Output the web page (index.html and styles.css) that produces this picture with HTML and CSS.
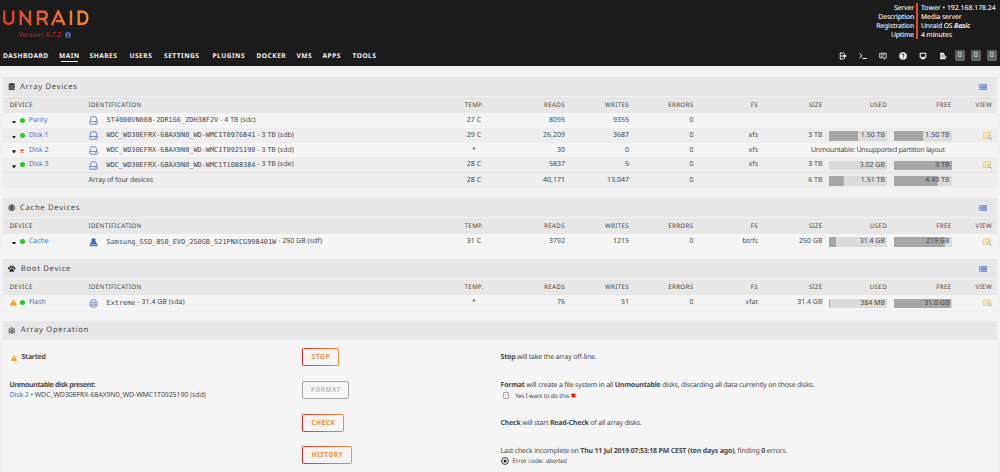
FILE: index.html
```html
<!DOCTYPE html>
<html lang="en">
<head>
<meta charset="utf-8">
<title>Tower/Main</title>
<link rel="stylesheet" href="styles.css">
</head>
<body>
<svg class="defs" aria-hidden="true">
  <symbol id="disk" viewBox="0 0 18 18"><path d="M1.5 11 4 2.5Q4.3 1.500 5.500 1.500H12.500Q13.700 1.500 14 2.500L16.500 11V15Q16.500 16.500 15 16.500H3Q1.500 16.500 1.500 15ZM1.500 11H16.500M12 13.800H14" fill="none" stroke="#5b78c4" stroke-width="1.700"/></symbol>
  <symbol id="ssd" viewBox="0 0 18 18"><path d="M5 1H13V8L16.500 12V16.500H1.500V12L5 8Z" fill="#4468c0"/><path d="M3 13.500H15" stroke="#dbe2f3" stroke-width="1.500"/></symbol>
  <symbol id="usb" viewBox="0 0 18 18"><path d="M4 7V4Q4 1.500 6 1.500H12Q14 1.500 14 4V7M1.500 8.500Q1.500 6.500 4 6.500H14Q16.500 6.500 16.500 8.500V12.500H1.500ZM3.500 12.500V14.500Q3.500 16.500 6 16.500H12Q14.500 16.500 14.500 14.500V12.500M4 10H14" fill="none" stroke="#5b78c4" stroke-width="1.500"/></symbol>
  <symbol id="list" viewBox="0 0 16 12"><path d="M0 1.500H2.500M0 4.500H2.500M0 7.500H2.500M0 10.500H2.500M3.500 1.500H16M3.500 4.500H16M3.500 7.500H16M3.500 10.500H16" stroke="#4d72c4" stroke-width="2"/></symbol>
  <symbol id="view" viewBox="0 0 18 16"><path d="M1 3Q1 1.500 2.500 1.500H7L8.500 1H14Q15 1 15 2.500V13H1Z" fill="#f9e4a4" stroke="#ecc26a" stroke-width="1.200"/><path d="M3 5H12" stroke="#fff4cd" stroke-width="1.500"/><circle cx="11.500" cy="9.500" r="3.200" fill="#cfe4f5" stroke="#9dbfdc"/><path d="M14 12 17 15" stroke="#6d95c4" stroke-width="2"/></symbol>
  <symbol id="warn" viewBox="0 0 16 14"><path d="M8 .5Q8.700 .5 9 1L15.700 12.500Q16 14 15 14H1Q0 14 .3 12.500L7 1Q7.300 .5 8 .5Z" fill="#f4920c"/><path d="M8 4.500V9M8 10.500V12.500" stroke="#fff3dc" stroke-width="2"/></symbol>
</svg>

<header class="top">
  <div class="brand">
    <svg class="logo" viewBox="0 0 86 16" preserveAspectRatio="none" role="img" aria-label="Unraid">
      <defs><linearGradient id="flame" gradientUnits="userSpaceOnUse" x1="0" y1="0" x2="86" y2="0"><stop offset="0" stop-color="#e03a2c"/><stop offset="1" stop-color="#f68b2d"/></linearGradient></defs>
      <g fill="none" stroke="url(#flame)" stroke-width="2.400">
        <path d="M1.200 .6V9.500Q1.200 14.200 5.700 14.200T10.200 9.500V.6"/>
        <path d="M17.800 15.400V2L27 14V.6"/>
        <path d="M35 15.400V1.800H40Q43.800 1.800 43.800 5.500T40 9.200H35M40.500 9.200 44.300 15.400"/>
        <path d="M49 15.400 55.300 1.500 61.500 15.400M53 11.500H59"/>
        <path d="M68 .6V15.400"/>
        <path d="M75.700 1.800V14.200H79Q84.300 14.200 84.300 8T79 1.800Z"/>
      </g>
    </svg>
    <div class="version"><span>Version: 6.7.2</span><svg viewBox="0 0 12 12"><circle cx="6" cy="6" r="6" fill="#486dba"/><path d="M6 2.500V4.200M4.800 5.500H6.300V9M4.500 9.200H7.800" stroke="#1c1b1b" stroke-width="1.500" fill="none"/></svg></div>
  </div>
  <dl class="server">
    <dt>Server</dt><dd class="ip">Tower • 192.168.178.24</dd>
    <dt>Description</dt><dd>Media server</dd>
    <dt>Registration</dt><dd>Unraid OS <b><i>Basic</i></b></dd>
    <dt>Uptime</dt><dd>4 minutes</dd>
  </dl>
  <nav class="menu">
    <a>DASHBOARD</a><a class="current">MAIN</a><a>SHARES</a><a>USERS</a><a>SETTINGS</a><a>PLUGINS</a><a>DOCKER</a><a>VMS</a><a>APPS</a><a>TOOLS</a>
  </nav>
  <div class="tools">
    <svg viewBox="0 0 16 16"><path d="M9 2H2.500V14H9M10.500 4V2.500M10.500 12V14" fill="none" stroke="#f2f2f2" stroke-width="2"/><path d="M5 6.500H10V3.500L15.500 8 10 12.500V9.500H5Z" fill="#f2f2f2"/></svg>
    <svg viewBox="0 0 16 16"><path d="M1 3 6 7.500 1 12M7 13H16" fill="none" stroke="#f2f2f2" stroke-width="2"/></svg>
    <svg viewBox="0 0 16 16"><path d="M1.500 2.500H14.500V11.500H11V14.500L8 11.500H1.500Z" fill="none" stroke="#f2f2f2" stroke-width="1.700"/><path d="M4 5.500H12M4 8.500H9.500" stroke="#f2f2f2" stroke-width="1.500"/></svg>
    <svg viewBox="0 0 16 16"><circle cx="8" cy="8" r="7.500" fill="#f2f2f2"/><path d="M5.700 6Q5.700 4 8 4T10.300 6Q10.300 7 8.200 8.300V9.500M8.200 11V13" fill="none" stroke="#1c1b1b" stroke-width="1.800"/></svg>
    <svg viewBox="0 0 16 16"><path d="M2.500 2.500H13.500V10.500H2.500Z" fill="none" stroke="#f2f2f2" stroke-width="2.200"/><path d="M4 11H12V14.500H4Z" fill="#f2f2f2"/></svg>
    <svg viewBox="0 0 16 16"><path d="M2 3H10M2 6.300H12M2 9.600H15M2 13H13" stroke="#f2f2f2" stroke-width="2.600"/></svg>
    <div class="badges"><span>0</span><span>0</span><span>0</span></div>
  </div>
</header>

<main>
<section class="panel">
  <h2 class="title"><svg viewBox="0 0 16 16"><path d="M1.500 3Q1.500 .5 8 .5T14.500 3V13Q14.500 15.500 8 15.500T1.500 13Z" fill="#222"/><path d="M1.500 4.500Q8 7.500 14.500 4.500M1.500 8Q8 11 14.500 8M1.500 11.500Q8 14.500 14.500 11.500" fill="none" stroke="#d8d8d8" stroke-width="1.200"/></svg><span>Array Devices</span><svg class="toggle"><use href="#list"/></svg></h2>
  <div class="row head"><span>DEVICE</span><span>IDENTIFICATION</span><span>TEMP.</span><span>READS</span><span>WRITES</span><span>ERRORS</span><span>FS</span><span>SIZE</span><span>USED</span><span>FREE</span><span>VIEW</span></div>
  <div class="row"><span class="dev"><i class="caret"></i><i class="dot"></i><a>Parity</a></span><span class="id"><svg><use href="#disk"/></svg><code>ST4000VN008-2DR166_ZDH38F2V</code><span>- 4 TB (sdc)</span></span><span>27 C</span><span>8095</span><span>9355</span><span>0</span><span></span><span></span><span></span><span></span><span></span></div>
  <div class="row alt"><span class="dev"><i class="caret"></i><i class="dot"></i><a>Disk 1</a></span><span class="id"><svg><use href="#disk"/></svg><code>WDC_WD30EFRX-68AX9N0_WD-WMC1T0976841</code><span>- 3 TB (sdb)</span></span><span>29 C</span><span>26,209</span><span>3687</span><span>0</span><span>xfs</span><span>3 TB</span><span class="bar" style="--fill:50%">1.50 TB</span><span class="bar" style="--fill:50%">1.50 TB</span><span class="view"><svg><use href="#view"/></svg></span></div>
  <div class="row"><span class="dev"><i class="caret"></i><i class="cross"><svg viewBox="0 0 8 8"><path d="M1 1 7 7M7 1 1 7" stroke="#f04a24" stroke-width="2.500"/></svg></i><a>Disk 2</a></span><span class="id"><svg><use href="#disk"/></svg><code>WDC_WD30EFRX-68AX9N0_WD-WMC1T0925190</code><span>- 3 TB (sdd)</span></span><span>*</span><span>30</span><span>0</span><span>0</span><span>xfs</span><span class="notice">Unmountable: Unsupported partition layout</span></div>
  <div class="row alt"><span class="dev"><i class="caret"></i><i class="dot"></i><a>Disk 3</a></span><span class="id"><svg><use href="#disk"/></svg><code>WDC_WD30EFRX-68AX9N0_WD-WMC1T1088384</code><span>- 3 TB (sde)</span></span><span>28 C</span><span>5837</span><span>5</span><span>0</span><span>xfs</span><span>3 TB</span><span class="bar" style="--fill:0%">3.02 GB</span><span class="bar" style="--fill:100%">3 TB</span><span class="view"><svg><use href="#view"/></svg></span></div>
  <div class="row total"><span></span><span class="sum">Array of four devices</span><span>28 C</span><span>40,171</span><span>13,047</span><span>0</span><span></span><span>6 TB</span><span class="bar" style="--fill:25.500%">1.51 TB</span><span class="bar" style="--fill:75%">4.49 TB</span><span></span></div>
</section>

<section class="panel">
  <h2 class="title"><svg viewBox="0 0 16 16"><circle cx="8" cy="8" r="6.300" fill="#999" stroke="#555" stroke-width="2"/><circle cx="8" cy="8" r="2.500" fill="#222"/><path d="M8 1V15" stroke="#444" stroke-width="1.500"/></svg><span>Cache Devices</span><svg class="toggle"><use href="#list"/></svg></h2>
  <div class="row head"><span>DEVICE</span><span>IDENTIFICATION</span><span>TEMP.</span><span>READS</span><span>WRITES</span><span>ERRORS</span><span>FS</span><span>SIZE</span><span>USED</span><span>FREE</span><span>VIEW</span></div>
  <div class="row"><span class="dev"><i class="caret"></i><i class="dot"></i><a>Cache</a></span><span class="id"><svg><use href="#ssd"/></svg><code>Samsung_SSD_850_EVO_250GB_S21PNXCG998401W</code><span>- 250 GB (sdf)</span></span><span>31 C</span><span>3792</span><span>1215</span><span>0</span><span>btrfs</span><span>250 GB</span><span class="bar" style="--fill:12.500%">31.4 GB</span><span class="bar" style="--fill:87.500%">219 GB</span><span class="view"><svg><use href="#view"/></svg></span></div>
</section>

<section class="panel">
  <h2 class="title"><svg viewBox="0 0 16 16"><g fill="#222"><ellipse cx="2.300" cy="7" rx="1.900" ry="2.500"/><ellipse cx="5.700" cy="3.500" rx="2" ry="2.700"/><ellipse cx="10.300" cy="3.500" rx="2" ry="2.700"/><ellipse cx="13.700" cy="7" rx="1.900" ry="2.500"/><path d="M8 7Q10 7 12.500 11.500Q13.500 14.500 11.500 14.800L8 14 4.500 14.800Q2.500 14.500 3.500 11.500Q6 7 8 7Z"/></g></svg><span class="wide">Boot Device</span><svg class="toggle"><use href="#list"/></svg></h2>
  <div class="row head"><span>DEVICE</span><span>IDENTIFICATION</span><span>TEMP.</span><span>READS</span><span>WRITES</span><span>ERRORS</span><span>FS</span><span>SIZE</span><span>USED</span><span>FREE</span><span>VIEW</span></div>
  <div class="row"><span class="dev"><svg class="alert"><use href="#warn"/></svg><i class="dot"></i><a>Flash</a></span><span class="id"><svg><use href="#usb"/></svg><code>Extreme</code><span>- 31.4 GB (sda)</span></span><span>*</span><span>76</span><span>51</span><span>0</span><span>vfat</span><span>31.4 GB</span><span class="bar" style="--fill:1.500%">384 MB</span><span class="bar" style="--fill:98.500%">31.0 GB</span><span class="view"><svg><use href="#view"/></svg></span></div>
</section>

<section class="operation">
  <h2 class="title"><svg viewBox="0 0 16 16"><path d="M8 0V16M1 4 15 12M15 4 1 12M5.500 1.500 8 4 10.500 1.500M5.500 14.500 8 12 10.500 14.500M1 7 4 6 3.500 2.500M15 7 12 6 12.500 2.500M1 9 4 10 3.500 13.500M15 9 12 10 12.500 13.500" fill="none" stroke="#333" stroke-width="1.300"/></svg><span class="wide">Array Operation</span></h2>
  <div class="ops">
    <div><p class="started"><svg><use href="#warn"/></svg><b>Started</b></p></div>
    <div><button class="b1">STOP</button></div>
    <div><p><b>Stop</b> will take the array off-line.</p></div>

    <div><p class="present"><b>Unmountable disk present:</b></p><p class="missing"><a>Disk 2</a> • WDC_WD30EFRX-68AX9N0_WD-WMC1T0925190 (sdd)</p></div>
    <div><button class="b2" disabled>FORMAT</button></div>
    <div><p><b>Format</b> will create a file system in all <b>Unmountable</b> disks, discarding all data currently on those disks.</p><p class="sub"><i class="check"></i>Yes I want to do this <svg viewBox="0 0 12 12"><path d="M6 .5V11.500M1 3.200 11 8.800M11 3.200 1 8.800" stroke="#f2160f" stroke-width="3.500"/></svg></p></div>

    <div></div>
    <div><button class="b3">CHECK</button></div>
    <div><p><b>Check</b> will start <b>Read-Check</b> of all array disks.</p></div>

    <div></div>
    <div><button class="b4">HISTORY</button></div>
    <div><p>Last check incomplete on <b>Thu 11 Jul 2019 07:53:18 PM CEST (ten days ago)</b>, finding <b>0</b> errors.</p><p class="sub err"><svg viewBox="0 0 16 16"><circle cx="8" cy="8" r="6.800" fill="none" stroke="#222" stroke-width="1.700"/><circle cx="8" cy="8" r="3" fill="#222"/></svg>Error code: <em>aborted</em></p></div>
  </div>
</section>
</main>
</body>
</html>
```

FILE: styles.css
```css
* { box-sizing: border-box; }
body {
  margin: 0;
  width: 1000px;
  height: 472px;
  overflow: hidden;
  background: #f2f2f2;
  color: #4a4a4a;
  font: 7px/10px "Noto Sans", sans-serif;
  text-rendering: geometricPrecision;
}
.defs { position: absolute; width: 0; height: 0; }
svg { display: block; flex: none; }
a { color: #5074c5; }
p, h2, dl, dd { margin: 0; }

.top {
  height: 66px;
  background: #1c1b1b;
  color: #f2f2f2;
  display: grid;
  grid-template-columns: 1fr 165px;
  grid-template-rows: 44px 22px;
}
.brand { padding: 10px 0 0 2.500px; }
.logo { width: 86px; height: 15.500px; }
.version {
  display: flex;
  align-items: center;
  gap: 3.500px;
  padding: 4px 0 0 16px;
  color: #b92b27;
  letter-spacing: -.1px;
}
.version span { padding-top: 1px; }
.version svg { width: 6px; height: 6px; margin-bottom: 1px; }
.server {
  display: grid;
  grid-template-columns: 1fr 82px;
  align-self: start;
  margin-top: 3px;
  font-weight: 500;
  font-size: 6.800px;
  line-height: 9.100px;
  letter-spacing: -.15px;
}
.server dt { text-align: right; padding-right: 2px; border-right: 2px solid #d8502e; }
.server dd { padding-left: 3px; white-space: nowrap; }
.server .ip { letter-spacing: .03px; }
.menu {
  display: grid;
  grid-template-columns: 56px 30.500px 40px 34.500px 48.500px 44px 40px 26px 30px auto;
  padding: 7px 0 0 3px;
  font-weight: 700;
  font-size: 6.600px;
  letter-spacing: .5px;
}
.menu a { color: #f2f2f2; display: block; justify-self: start; height: 12px; }
.menu .current { background: linear-gradient(#f2f2f2, #f2f2f2) 1.500px 10px / 17px 1px no-repeat; }
.tools {
  display: grid;
  grid-template-columns: repeat(6, 20px) 1fr;
  align-items: center;
  padding-left: 4px;
  height: 23px;
}
.tools svg { width: 8px; height: 8px; }
.badges { display: flex; gap: 5.500px; margin-left: -4.500px; }
.badges span {
  width: 10.500px;
  height: 11px;
  flex: none;
  border-radius: 2px;
  background: #626262;
  text-align: center;
  line-height: 12px;
}

main { padding: 11px 3px 0; }
.panel { margin-bottom: 10.500px; }
.title {
  display: flex;
  align-items: center;
  height: 19px;
  padding: 0 10.500px 0 5px;
  background: #e7e7e7;
  font-size: 7.700px;
  font-weight: 400;
  letter-spacing: .68px;
}
.title svg { width: 7.500px; height: 7.500px; margin-right: 4.500px; }
.title .toggle { width: 8px; height: 6px; margin: 0 0 0 auto; }
.title .wide { padding-left: .8px; }
.row {
  display: grid;
  grid-template-columns: 85.500px 351.500px 68px 57px 64px 64.500px 64.500px 64.500px 64.500px 64.500px 40.500px;
  align-items: center;
  height: 14.800px;
  padding-top: 1.200px;
  background: #f5f5f5;
}
.row > :nth-child(n+3) { text-align: right; }
.row > :nth-child(3) { text-align: center; }
.head {
  height: 16px;
  margin-top: 1px;
  padding: 0 0 1px;
  background: #e7e7e7;
  font-size: 6.200px;
  letter-spacing: .35px;
}
.head > :first-child { padding-left: 6.500px; }
.alt { background: #ededed; }
.total { height: 15.500px; border-top: 1px solid #e2e2e2; background: #ededed; }
.sum { letter-spacing: -.15px; }
.dev { display: flex; align-items: center; padding-left: 9px; letter-spacing: -.08px; }
.caret { width: 4px; height: 2.500px; margin: 2px 4px 0 0; background: #222; clip-path: polygon(0 0, 100% 0, 70% 100%, 30% 100%); }
.dot { width: 5px; height: 5px; margin: 0 4px 1px 0; border-radius: 50%; background: #2bc82b; }
.cross { width: 5px; margin: 0 4px 0 0; }
.cross svg { width: 4px; height: 4px; }
.alert { width: 7px; height: 7px; margin: 0 3px 1px -2px; }
.id { display: flex; align-items: center; white-space: nowrap; }
.id svg { width: 9px; height: 9px; margin: 0 9px 0 0; }
.id code { font: 6.880px/10px "DejaVu Sans Mono", monospace; margin: -1px 2px 0 0; }
.row > .bar {
  height: 9.500px;
  margin-left: 6.500px;
  padding-right: 2px;
  line-height: 9.500px;
  background: linear-gradient(#a6a6a6, #a6a6a6) 0 0 / var(--fill) 100% no-repeat, #dbdbdb;
}
.view { display: flex; justify-content: flex-end; }
.view svg { width: 9px; height: 8px; }
.row > .notice { grid-column: 8 / 11; text-align: left; padding-left: 53px; white-space: nowrap; letter-spacing: -.28px; }

.operation { background: #f5f5f5; height: 152px; }
.ops {
  display: grid;
  grid-template-columns: 292.500px 198.500px 1fr;
  grid-template-rows: repeat(4, 32.700px);
  align-items: center;
  padding: 1.200px 0 0 6.500px;
}
.ops p { line-height: 9.400px; white-space: nowrap; letter-spacing: -.2px; }
.ops p:first-child { padding-top: 1.500px; }
.ops .present { letter-spacing: -.37px; }
.ops .missing { letter-spacing: -.1px; }
.ops .started { display: flex; align-items: center; letter-spacing: -.25px; }
.started svg { width: 6px; height: 6px; margin: 0 5px 0 1px; }
button {
  display: block;
  height: 18px;
  padding: 0 0 0 1px;
  background: linear-gradient(90deg, #e03237, #fd8c3c) 0 0 / 100% 1px no-repeat,
    linear-gradient(90deg, #e03237, #fd8c3c) 0 100% / 100% 1px no-repeat,
    linear-gradient(#e22828, #e22828) 0 0 / 1px 100% no-repeat,
    linear-gradient(#ff8c2f, #ff8c2f) 100% 0 / 1px 100% no-repeat;
  border: 0;
  border-radius: 2px;
  color: #f68a35;
  font: 700 6.200px/18px "Noto Sans", sans-serif;
  letter-spacing: .7px;
}
.b1 { width: 37px; }
.b2 { width: 47px; }
.b3 { width: 42px; }
.b4 { width: 50px; }
button:disabled { border: 1px solid #a5a5a5; background: none; color: #bdbdbd; line-height: 16px; }
.sub { display: flex; align-items: center; font-size: 6.200px; }
.sub svg { width: 5px; height: 5px; margin-left: 2px; }
.check { width: 6.500px; height: 6.500px; margin: 0 6px 0 2px; border: 1px solid #aaa; border-radius: 1px; background: #e8e8e8; }
.err svg { width: 8px; height: 8px; margin: 0 4px 0 0; }
.ops .err { letter-spacing: -.08px; }
.err em { margin-left: 2px; }
```
